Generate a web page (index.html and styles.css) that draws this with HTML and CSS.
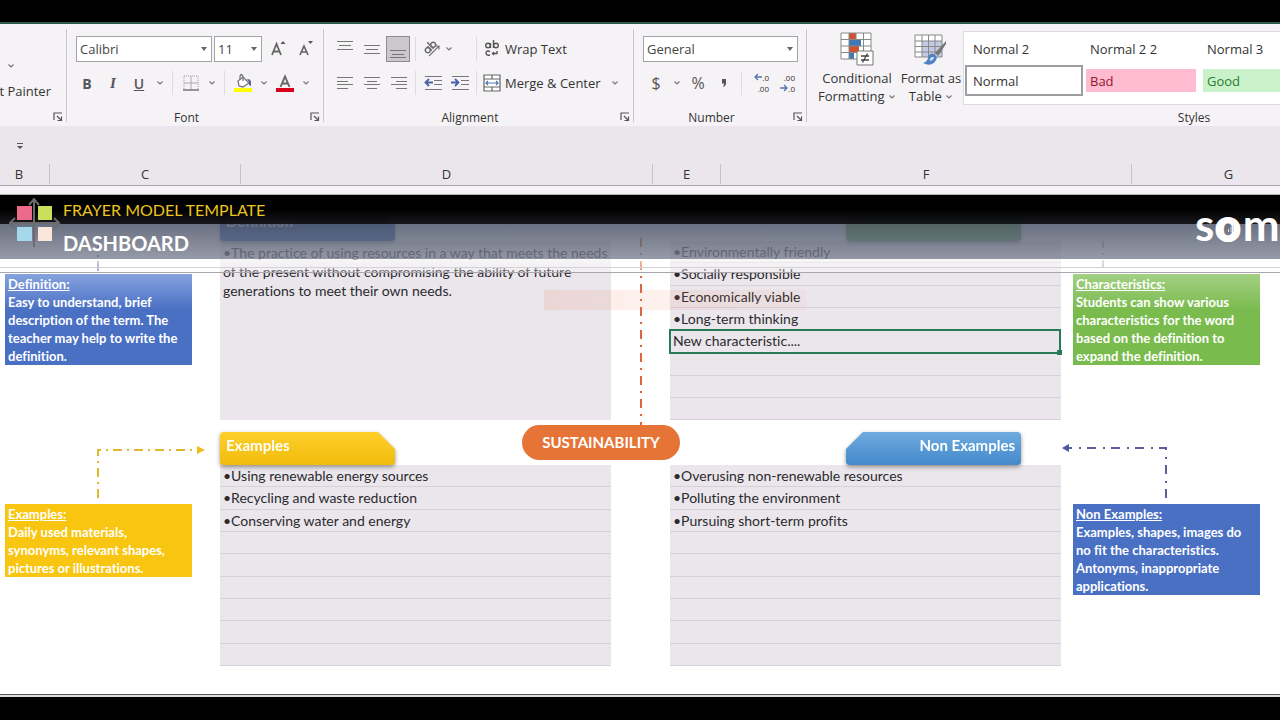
FILE: index.html
```html
<!DOCTYPE html>
<html lang="en">

<head>
    <meta charset="UTF-8">
    <meta name="viewport" content="width=device-width, initial-scale=1.0">
    <title>Frayer Model Template</title>
    <link rel="stylesheet" href="styles.css">
</head>

<body>
    <!-- shared icons -->
    <svg class="defs" width="0" height="0">
        <symbol id="chev" viewBox="0 0 8 8"><path d="M1.500 2.500 4 5l2.500-2.500" fill="none" stroke="#777" stroke-width="1.200"/></symbol>
        <symbol id="launch" viewBox="0 0 10 10"><path d="M1 8V1h8M4 4l4 4M8.500 4.500v4h-4" fill="none" stroke="#555" stroke-width="1.200"/></symbol>
    </svg>

    <div class="titlebar"></div>

    <div class="ribbon">
        <div class="group clipboard">
            <div class="row row-paste"><button class="drop" aria-label="Copy options"><svg><use href="#chev"/></svg></button></div>
            <div class="row row-painter"><button class="painter">Format Painter</button></div>
            <div class="foot"><span></span><button class="launch" aria-label="Clipboard settings"><svg><use href="#launch"/></svg></button></div>
        </div>

        <div class="group font">
            <div class="row boxes">
                <div class="combo combo-font"><select aria-label="Font"><option>Calibri</option></select></div>
                <div class="combo combo-size"><select aria-label="Font size"><option>11</option></select></div>
                <button class="tool grow" aria-label="Increase font size">
                    <svg width="18" height="20" viewBox="0 0 18 20"><path d="M2 16 6.500 5 11 16M3.500 12.500h6" fill="none" stroke="#666" stroke-width="1.800"/><path d="m10.500 5 2.500-3 2.500 3z" fill="#555"/></svg>
                </button>
                <button class="tool" aria-label="Decrease font size">
                    <svg width="18" height="20" viewBox="0 0 18 20"><path d="M2 16 6 7l4 9M3.500 13h5" fill="none" stroke="#666" stroke-width="1.700"/><path d="m10 2 2.500 3L15 2z" fill="#555"/></svg>
                </button>
            </div>
            <div class="row tools">
                <button class="tool bold">B</button>
                <button class="tool italic">I</button>
                <button class="tool under">U</button>
                <button class="drop" aria-label="Underline styles"><svg><use href="#chev"/></svg></button>
                <i class="sep"></i>
                <button class="tool" aria-label="Borders">
                    <svg width="16" height="16" viewBox="0 0 16 16"><path d="M1 1h14M1 1v14M15 1v14" fill="none" stroke="#999" stroke-dasharray="1 1"/><path d="M8 1v14M1 8h14" stroke="#aaa"/><path d="M0 15h16" stroke="#777" stroke-width="1.500"/></svg>
                </button>
                <button class="drop" aria-label="Border styles"><svg><use href="#chev"/></svg></button>
                <i class="sep"></i>
                <button class="tool" aria-label="Fill color">
                    <svg width="20" height="20" viewBox="0 0 20 20"><path d="m5 8 5-4 6 6-6 4-4-1z" fill="#fff" stroke="#777" stroke-width="1.300"/><path d="M7 7V3.500Q8-.5 10 3.500V8" fill="none" stroke="#777" stroke-width="1.300"/><path d="M14 6q4 0 4 3v4l-2-1v-3z" fill="#5561a5"/><path d="M1 15h18v4H1z" fill="#ff0"/></svg>
                </button>
                <button class="drop" aria-label="Fill colors"><svg><use href="#chev"/></svg></button>
                <button class="tool" aria-label="Font color">
                    <svg width="20" height="20" viewBox="0 0 20 20"><path d="M5.500 14 10 3.500 14.500 14M7 10.500h6" fill="none" stroke="#666" stroke-width="1.900"/><path d="M1 15h18v4H1z" fill="#d9001b"/></svg>
                </button>
                <button class="drop" aria-label="Font colors"><svg><use href="#chev"/></svg></button>
            </div>
            <div class="foot"><span>Font</span><button class="launch" aria-label="Font settings"><svg><use href="#launch"/></svg></button></div>
        </div>

        <div class="group align">
            <div class="row tools">
                <button class="tool" aria-label="Top align"><svg width="16" height="20"><path d="M0 2.500h16M2 6.500h12M0 10.500h16" stroke="#777"/></svg></button>
                <button class="tool" aria-label="Middle align"><svg width="16" height="20"><path d="M0 6.500h16M2 10.500h12M0 14.500h16" stroke="#777"/></svg></button>
                <button class="tool pressed" aria-label="Bottom align"><svg width="16" height="20"><path d="M0 11.500h16M2 15.500h12M0 18.500h16" stroke="#777"/></svg></button>
                <i class="sep"></i>
                <button class="tool split" aria-label="Orientation">
                    <svg width="20" height="20" viewBox="0 0 20 20"><g fill="none" stroke="#666" stroke-width="1.400" transform="rotate(-45 8 9)"><circle cx="5" cy="9" r="2.500"/><path d="M7.500 6v6M10 3v9"/><circle cx="12.500" cy="9" r="2.500"/></g><path d="m7 17 10-10M13.500 7H17v3.500" fill="none" stroke="#777" stroke-width="1.200"/></svg>
                    <svg width="8" height="8"><use href="#chev"/></svg>
                </button>
                <i class="sep"></i>
                <button class="command">
                    <svg width="18" height="20" viewBox="0 0 18 20"><g fill="none" stroke="#555" stroke-width="1.400"><circle cx="5" cy="6.500" r="2.300"/><path d="M7.500 4v5M10.500 1v8"/><circle cx="13" cy="6.500" r="2.300"/><path d="M7 12.500q-3-1.500-4 1 0 3.500 4 2.500M14 12v2.500H9.500M11 13l-1.500 1.500L11 16"/></g></svg>
                    Wrap Text
                </button>
            </div>
            <div class="row tools">
                <button class="tool" aria-label="Align left"><svg width="16" height="14"><path d="M0 1.500h16M0 5.500h11M0 8.500h16M0 12.500h11" stroke="#777"/></svg></button>
                <button class="tool" aria-label="Center"><svg width="16" height="14"><path d="M0 1.500h16M3 5.500h10M0 8.500h16M3 12.500h10" stroke="#777"/></svg></button>
                <button class="tool" aria-label="Align right"><svg width="16" height="14"><path d="M0 1.500h16M5 5.500h11M0 8.500h16M5 12.500h11" stroke="#777"/></svg></button>
                <i class="sep"></i>
                <button class="tool" aria-label="Decrease indent"><svg width="18" height="16"><path d="M1 1.500h17M10 5.500h8M10 9.500h8M1 14.500h17" stroke="#777"/><path d="M9 7.500H2M5 4 1.500 7.500 5 11" fill="none" stroke="#4b62a8" stroke-width="1.800"/></svg></button>
                <button class="tool" aria-label="Increase indent"><svg width="18" height="16"><path d="M1 1.500h17M10 5.500h8M10 9.500h8M1 14.500h17" stroke="#777"/><path d="M0 7.500h7M4 4l3.500 3.500L4 11" fill="none" stroke="#4b62a8" stroke-width="1.800"/></svg></button>
                <i class="sep"></i>
                <button class="command">
                    <svg width="18" height="18" viewBox="0 0 18 18"><path d="M1 1h16v16H1zM1 5h16M1 13h16M9 1v4M9 13v4" fill="#fff" stroke="#666" stroke-width="1.200"/><path d="M3 9h12M5 7 3 9l2 2M13 7l2 2-2 2" fill="none" stroke="#4b78b8" stroke-width="1.200"/></svg>
                    Merge &amp; Center
                </button>
                <button class="drop" aria-label="Merge options"><svg><use href="#chev"/></svg></button>
            </div>
            <div class="foot"><span>Alignment</span><button class="launch" aria-label="Alignment settings"><svg><use href="#launch"/></svg></button></div>
        </div>

        <div class="group number">
            <div class="row boxes">
                <div class="combo combo-number"><select aria-label="Number format"><option>General</option></select></div>
            </div>
            <div class="row tools">
                <button class="tool symbol">$</button>
                <button class="drop" aria-label="Currencies"><svg><use href="#chev"/></svg></button>
                <button class="tool symbol">%</button>
                <button class="tool symbol comma" aria-label="Comma style"><svg width="8" height="14"><path d="M2 3h4v4q0 3-3 4 1-2 1-3.500H2z" fill="#555"/></svg></button>
                <i class="sep"></i>
                <button class="tool decimals" aria-label="Increase decimal">
                    <span><svg width="8" height="8"><path d="M8 4H1M4 1 1 4l3 3" fill="none" stroke="#5670b0" stroke-width="1.300"/></svg>.0</span><span>.00</span>
                </button>
                <button class="tool decimals" aria-label="Decrease decimal">
                    <span>.00</span><span><svg width="8" height="8"><path d="M0 4h7M4 1l3 3-3 3" fill="none" stroke="#5670b0" stroke-width="1.300"/></svg>.0</span>
                </button>
            </div>
            <div class="foot"><span>Number</span><button class="launch" aria-label="Number settings"><svg><use href="#launch"/></svg></button></div>
        </div>

        <div class="group styles">
            <div class="big-row">
                <button class="big conditional">
                    <svg width="34" height="34" viewBox="0 0 34 34"><path d="M1 1h30v26H1z" fill="#fff"/><path d="M9 1h7v6H9zM9 14h10v6H9z" fill="#d0502f"/><path d="M9 7h12v7H9zM9 20h5v7H9z" fill="#3f78b5"/><path d="M1 1h30v26H1zM1 7.500h30M1 14h30M1 20.500h30M9 1v26M16 1v6M23.500 1v26" fill="none" stroke="#888"/><path d="M17 19h16v14H17z" fill="#fff" stroke="#777"/><path d="M21 24h8M21 28h8M27.500 21.500l-5 9" stroke="#444" stroke-width="1.300"/></svg>
                    <span>Conditional</span>
                    <span>Formatting <svg width="8" height="8"><use href="#chev"/></svg></span>
                </button>
                <button class="big table">
                    <svg width="34" height="34" viewBox="0 0 34 34"><path d="M1 3h27v22H1z" fill="#fff"/><path d="M8 9h20v16H8z" fill="#c3cae4"/><path d="M1 3h27v22H1zM1 9h27M1 14.500h27M1 20h27M8 3v22M14.500 3v22M21 3v22" fill="none" stroke="#888"/><path d="m32 9-11 12 3 3 8-12z" fill="#777"/><path d="M20 22q-5-1-6 4-1 4-5 5 10 5 14-5z" fill="#4d82c4"/><path d="M18 25q-3 1-2 4 4-1 4-4z" fill="#c9dcf4"/></svg>
                    <span>Format as</span>
                    <span>Table <svg width="8" height="8"><use href="#chev"/></svg></span>
                </button>
                <div class="gallery">
                    <button>Normal 2</button>
                    <button>Normal 2 2</button>
                    <button>Normal 3</button>
                    <button class="current">Normal</button>
                    <button class="bad">Bad</button>
                    <button class="good">Good</button>
                </div>
            </div>
            <div class="foot"><span>Styles</span></div>
        </div>
    </div>

    <div class="quickbar">
        <button aria-label="Customize toolbar"><svg width="8" height="8"><path d="M1 1.500h6" stroke="#555"/><path d="M1 4h6L4 7z" fill="#555"/></svg></button>
    </div>

    <div class="columns">
        <span>B</span><span>C</span><span>D</span><span>E</span><span>F</span><span>G</span>
    </div>

    <main class="sheet">
        <header class="banner">
            <svg class="mark" width="52" height="52" viewBox="0 0 52 52">
                <path d="M25 50V3M20 8l5-6 5 6M1 26h49M6 21l-5 5 5 5M45 21l5 5-5 5" fill="none" stroke="#6b6b6e" stroke-width="2"/>
                <path d="M8 9h15v14H8z" fill="#ee6a8c"/>
                <path d="M29 9h14v14H29z" fill="#cbe05a"/>
                <path d="M8 30h15v14H8z" fill="#a5d8ea"/>
                <path d="M29 30h14v14H29z" fill="#fbe6dc"/>
            </svg>
            <div class="titles">
                <h1>FRAYER MODEL TEMPLATE</h1>
                <h2>DASHBOARD</h2>
            </div>
            <div class="brand">s<b>o</b>m
                <svg class="bars" width="8" height="8"><path d="M1.500 8V5M4 8V3M6.500 8V1" stroke="#ddd"/></svg>
            </div>
        </header>
        <div class="frost"></div>

        <section class="band band-top">
            <div class="side">
                <svg class="stem" width="187" height="30"><path d="M93 0v30" stroke="#5b5f9c" stroke-width="1.500" stroke-dasharray="10 4 2 4"/></svg>
                <div class="note blue fade-blue"><u>Definition:</u><br>Easy to understand, brief description of the term. The teacher may help to write the definition.</div>
            </div>
            <div class="quad">
                <div class="tab-shadow"><h3 class="tab tab-left navy">Definition</h3></div>
                <p class="panel text">•The practice of using resources in a way that meets the needs of the present without compromising the ability of future generations to meet their own needs.</p>
            </div>
            <div class="middle">
                <svg width="4" height="190"><path d="M2 0v190" stroke="#d9663c" stroke-width="2" stroke-dasharray="9 6 2 6"/></svg>
            </div>
            <div class="quad">
                <div class="tab-shadow right"><h3 class="tab tab-right green"></h3></div>
                <ul class="panel rows">
                    <li>•Environmentally friendly</li>
                    <li>•Socially responsible</li>
                    <li>•Economically viable</li>
                    <li>•Long-term thinking</li>
                    <li class="selected">New characteristic....</li>
                    <li></li>
                    <li></li>
                    <li></li>
                </ul>
            </div>
            <div class="side side-right">
                <svg class="stem" width="187" height="30"><path d="M30 0v30" stroke="#6b7080" stroke-dasharray="7 5 2 5"/></svg>
                <div class="note green-note"><u>Characteristics:</u><br>Students can show various characteristics for the word based on the definition to expand the definition.</div>
            </div>
        </section>

        <section class="band band-bottom">
            <div class="side">
                <svg class="link" width="205" height="72"><path d="M93 66V18h100" fill="none" stroke="#dcb82a" stroke-width="2" stroke-dasharray="9 5 2 5"/><path d="m192 14 8 4-8 4z" fill="#eebc1c"/></svg>
                <div class="note yellow-note"><u>Examples:</u><br>Daily used materials, synonyms, relevant shapes, pictures or illustrations.</div>
            </div>
            <div class="quad">
                <div class="tab-shadow"><h3 class="tab tab-left yellow">Examples</h3></div>
                <ul class="panel rows">
                    <li>•Using renewable energy sources</li>
                    <li>•Recycling and waste reduction</li>
                    <li>•Conserving water and energy</li>
                    <li></li>
                    <li></li>
                    <li></li>
                    <li></li>
                    <li></li>
                    <li></li>
                </ul>
            </div>
            <div class="middle"></div>
            <div class="quad">
                <div class="tab-shadow right"><h3 class="tab tab-right sky">Non Examples</h3></div>
                <ul class="panel rows">
                    <li>•Overusing non-renewable resources</li>
                    <li>•Polluting the environment</li>
                    <li>•Pursuing short-term profits</li>
                    <li></li>
                    <li></li>
                    <li></li>
                    <li></li>
                    <li></li>
                    <li></li>
                </ul>
            </div>
            <div class="side side-right">
                <svg class="link link-right" width="199" height="72"><path d="M105 66V16H8" fill="none" stroke="#5d60a0" stroke-width="2" stroke-dasharray="9 6 2 7"/><path d="m8 12-7 4 7 4z" fill="#5056a0"/></svg>
                <div class="note blue"><u>Non Examples:</u><br>Examples, shapes, images do no fit the characteristics. Antonyms, inappropriate applications.</div>
            </div>
        </section>

        <div class="streak"></div>
        <div class="term">SUSTAINABILITY</div>
    </main>

    <footer class="statusbar"></footer>
</body>

</html>
```
FILE: styles.css
```css
* {
    box-sizing: border-box;
}

body {
    margin: 0;
    min-height: 100vh;
    display: flex;
    flex-direction: column;
    font-family: 'Open Sans', 'Noto Sans', sans-serif;
    font-size: 13px;
    color: #333;
    background: #fff;
    overflow: hidden;
}

.defs {
    position: absolute;
}

button {
    padding: 0;
    border: 0;
    background: none;
    font: inherit;
    color: inherit;
}

h1,
h2,
h3,
p,
ul {
    margin: 0;
    padding: 0;
}

.titlebar {
    height: 24px;
    background: #000;
    border-bottom: 2px solid #2f5a4a;
}

/* ribbon */
.ribbon {
    display: flex;
    height: 102px;
    background: #f6f3f7;
    overflow: hidden;
}

.group {
    flex: none;
    display: flex;
    flex-direction: column;
    gap: 10px;
    padding-top: 13px;
    position: relative;
}

.group::after {
    content: "";
    position: absolute;
    top: 5px;
    right: 0;
    bottom: 4px;
    width: 1px;
    background: #c9c6ca;
}

.clipboard {
    width: 67px;
    gap: 4px;
}

.font {
    width: 257px;
}

.align {
    width: 310px;
}

.number {
    width: 173px;
}

.styles {
    width: 774px;
    padding-top: 7px;
    gap: 0;
}

.row {
    display: flex;
    align-items: center;
    height: 24px;
}

.boxes {
    padding-left: 9px;
    gap: 2px;
}

.tools {
    padding-left: 7px;
}

.number .tools {
    padding-left: 9px;
}

.row-paste {
    height: 41px;
    padding-left: 3px;
    align-items: flex-end;
}

.row-painter {
    height: 18px;
    justify-content: flex-end;
    padding-right: 16px;
    white-space: nowrap;
}

.foot {
    display: flex;
    align-items: center;
    height: 18px;
    margin-top: auto;
    font-size: 12px;
}

.foot span {
    flex: 1;
    text-align: center;
}

.launch {
    width: 18px;
    height: 18px;
    display: flex;
    align-items: center;
    justify-content: center;
}

.launch svg {
    width: 10px;
    height: 10px;
}

.combo {
    position: relative;
    height: 26px;
}

.combo select {
    appearance: none;
    width: 100%;
    height: 100%;
    padding: 0 3px;
    border: 1px solid #a5a2a8;
    border-radius: 0;
    background: #fff;
    font: inherit;
    color: #444;
}

.combo::after {
    content: "";
    position: absolute;
    right: 5px;
    top: 11px;
    border: 3px solid transparent;
    border-top: 4px solid #666;
    border-bottom: 0;
}

.combo-font {
    width: 136px;
}

.combo-size {
    width: 48px;
}

.combo-number {
    width: 155px;
}

.tool {
    width: 26px;
    height: 26px;
    display: flex;
    align-items: center;
    justify-content: center;
}

.align .tool {
    width: 27px;
}

.grow {
    margin-left: 2px;
}

.bold {
    font-weight: 700;
    font-size: 14px;
}

.italic {
    font-family: 'Liberation Serif', serif;
    font-style: italic;
    font-weight: 700;
    font-size: 15px;
}

.under {
    font-weight: 600;
    font-size: 14px;
    text-decoration: underline;
}

.bold,
.italic,
.under {
    color: #555;
}

.align .pressed {
    width: 24px;
    margin: 0 2px 0 1px;
    background: #cbc8cc;
    border: 1px solid #8e8b90;
}

.align .split {
    width: 54px;
    justify-content: flex-start;
    padding-left: 3px;
    gap: 3px;
}

.drop {
    width: 16px;
    height: 24px;
    display: flex;
    align-items: center;
    justify-content: center;
}

.drop svg {
    width: 8px;
    height: 8px;
}

.sep {
    flex: none;
    width: 1px;
    height: 24px;
    margin: 0 5px 0 4px;
    background: #dedbdf;
}

.align .sep {
    margin: 0 3px;
}

.command {
    display: flex;
    align-items: center;
    gap: 4px;
    margin-left: 3px;
    white-space: nowrap;
}

.align .drop {
    margin-left: 6px;
}

.symbol {
    font-size: 16px;
    color: #555;
}

.decimals {
    flex-direction: column;
    align-items: flex-end;
    padding-right: 4px;
    font-size: 8px;
    line-height: 11px;
}

.big-row {
    display: flex;
}

.big {
    display: flex;
    flex-direction: column;
    align-items: center;
    padding-top: 1px;
    line-height: 18px;
    white-space: nowrap;
}

.big > svg {
    margin-bottom: 3px;
}

.conditional {
    width: 92px;
    padding-left: 8px;
}

.table {
    width: 64px;
}

.gallery {
    flex: 1;
    display: grid;
    grid-template-columns: repeat(5, 110px);
    grid-template-rows: 28px 23px;
    column-gap: 7px;
    row-gap: 6px;
    padding: 3px 0 5px 5px;
    background: #fff;
    border: 1px solid #dedbe0;
    overflow: hidden;
}

.gallery button {
    padding-left: 4px;
    text-align: left;
}

/* three cells show per line, the rest is scrolled away */
.gallery button:nth-child(4) {
    grid-column: 1;
}

.gallery .current {
    margin: -4px;
    padding-left: 6px;
    border: 2px solid #a09da2;
}

.gallery .bad {
    background: #ffbcd0;
    color: #93142e;
}

.gallery .good {
    background: #c9f2cb;
    color: #2a7a2c;
}

/* toolbar strip and column letters */
.quickbar {
    display: flex;
    align-items: center;
    height: 38px;
    padding-left: 16px;
    background: #eae6eb;
}

.columns {
    display: grid;
    grid-template-columns: 61px 191px 412px 68px 411px 194px;
    height: 22px;
    padding-bottom: 1px;
    margin-left: -11px;
    background: #eae6eb;
    border-bottom: 1px solid #aaa7ac;
    font-size: 13px;
    line-height: 20px;
    text-align: center;
}

.columns span {
    border-right: 1px solid #c6c3c8;
}

/* worksheet */
.sheet {
    flex: 1;
    position: relative;
    overflow: hidden;
    font-family: Lato, 'Open Sans', sans-serif;
    font-size: 14px;
    font-variant-ligatures: none;
    color: #2b2b2e;
    background: linear-gradient(#f6f3f7 8px, #b5b2b7 8px, #b5b2b7 9px, #fff 9px);
}

.banner {
    position: absolute;
    top: 9px;
    left: 0;
    right: 0;
    z-index: 2;
    height: 64px;
    display: flex;
    padding-left: 9px;
    color: #fff;
    background: linear-gradient(#000 0, #000 14px, rgba(20, 20, 23, .98) 29px, rgba(81, 89, 107, .86) 29px, rgba(118, 124, 142, .76) 100%);
    overflow: hidden;
}

.mark {
    margin: 2px 2px 0 0;
}

.titles {
    flex: 1;
}

.titles h1 {
    font-size: 16px;
    line-height: 30px;
    font-weight: 400;
    color: #ecc51d;
}

.titles h2 {
    font-size: 20px;
    line-height: 36px;
    font-weight: 700;
}

.brand {
    position: relative;
    width: 85px;
    font-size: 44px;
    line-height: 58px;
    font-weight: 700;
    white-space: nowrap;
}

.brand b {
    margin: 0 2px 0 1px;
    -webkit-text-stroke: 2px #fff;
}

.bars {
    position: absolute;
    left: 32px;
    top: 29px;
}

/* translucent edge under the banner */
.frost {
    position: absolute;
    top: 73px;
    left: 0;
    right: 0;
    z-index: 2;
    height: 14px;
    background: linear-gradient(rgba(255, 255, 255, .6), rgba(255, 255, 255, .3));
    border-bottom: 1px solid #a9a6ae;
}

.frost::before {
    content: "";
    display: block;
    height: 8px;
    border-bottom: 1px solid #d4d1d8;
}

.band {
    display: grid;
    grid-template-columns: 220px 391px 59px 391px 1fr;
}

.band-top {
    height: 246px;
    padding-top: 22px;
}

.side {
    padding-left: 5px;
}

.side-right {
    padding-left: 12px;
}

.side svg {
    display: block;
}

.stem {
    margin: 33px 0 3px;
}

.link-right {
    margin-left: -12px;
}

.note {
    width: 187px;
    padding: 1px 2px 0 3px;
    font-size: 13px;
    line-height: 18px;
    font-weight: 700;
    color: #fff;
}

.blue {
    background: #4a70c4;
}

.fade-blue {
    background: linear-gradient(#86a2de, #4a70c4 36px);
}

.green-note {
    background: linear-gradient(#a3d083, #7abb4e 36px);
}

.yellow-note {
    background: #f8c510;
}

.tab-shadow {
    height: 33px;
    filter: drop-shadow(0 2px 2px rgba(60, 50, 40, .5));
}

.right {
    display: flex;
    justify-content: flex-end;
    padding-right: 40px;
}

.tab {
    width: 175px;
    height: 33px;
    padding: 0 6px;
    border-radius: 4px;
    font-size: 15px;
    line-height: 26px;
    font-weight: 700;
    color: #fff;
}

.tab-left {
    clip-path: polygon(0 0, calc(100% - 17px) 0, 100% 17px, 100% 100%, 0 100%);
}

.tab-right {
    clip-path: polygon(17px 0, 100% 0, 100% 100%, 0 100%, 0 17px);
    text-align: right;
}

.navy {
    background: #2f5cb4;
}

.green {
    background: #5da04a;
}

.yellow {
    background: linear-gradient(#ffd02b, #f0bb0c);
}

.sky {
    background: linear-gradient(#6fabdf, #4389cb);
}

.panel {
    background: #eae6eb;
}

.text {
    height: 179px;
    padding: 2px 3px;
    line-height: 19px;
}

.rows {
    display: flex;
    flex-direction: column;
    height: 179px;
    list-style: none;
}

.band-bottom .rows {
    height: 201px;
}

.rows li {
    flex: 1;
    padding-left: 3px;
    line-height: 21px;
    border-bottom: 1px solid #d6d2dc;
}

.rows .selected {
    position: relative;
    margin: -1px 0 -1px -1px;
    line-height: 20px;
    border: 2px solid #2b7a57;
    padding-left: 2px;
}

.rows .selected::after {
    content: "";
    position: absolute;
    right: -3px;
    bottom: -3px;
    width: 5px;
    height: 5px;
    background: #2b7a57;
}

.middle svg {
    display: block;
    margin: 30px 0 0 28px;
}

/* faint arrow trail across the gap */
.streak {
    position: absolute;
    top: 104px;
    left: 544px;
    width: 262px;
    height: 20px;
    background: linear-gradient(90deg, rgba(240, 130, 100, .16), rgba(240, 130, 100, .06));
}

.term {
    position: absolute;
    top: 239px;
    left: 522px;
    width: 158px;
    height: 35px;
    border-radius: 18px;
    background: #e57436;
    font-size: 15px;
    line-height: 35px;
    font-weight: 700;
    text-align: center;
    color: #fff;
}

.statusbar {
    height: 26px;
    background: #000;
    border-top: 1px solid #555;
    box-shadow: inset 0 2px #ddd;
}
```
